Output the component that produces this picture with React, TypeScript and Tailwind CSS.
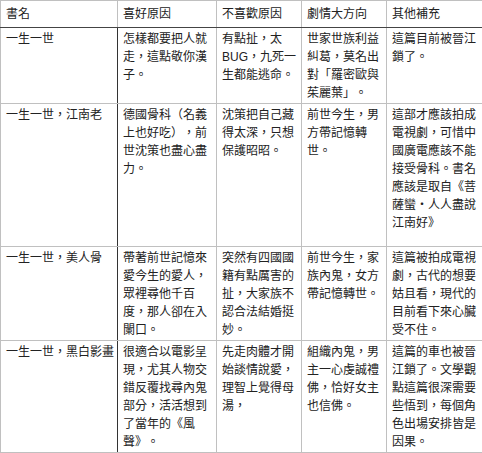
const headers = ["書名", "喜好原因", "不喜歡原因", "劇情大方向", "其他補充"];

const rows: { name: string; like: string; dislike: string; plot: string; note: string; tall?: boolean }[] = [
  {
    name: "一生一世",
    like: "怎樣都要把人就走，這點敬你漢子。",
    dislike: "有點扯，太BUG，九死一生都能逃命。",
    plot: "世家世族利益糾葛，莫名出對「羅密歐與茱麗葉」。",
    note: "這篇目前被晉江鎖了。",
  },
  {
    name: "一生一世，江南老",
    like: "德國骨科（名義上也好吃），前世沈策也盡心盡力。",
    dislike: "沈策把自己藏得太深，只想保護昭昭。",
    plot: "前世今生，男方帶記憶轉世。",
    note: "這部才應該拍成電視劇，可惜中國廣電應該不能接受骨科。書名應該是取自《菩薩蠻‧人人盡說江南好》",
    tall: true,
  },
  {
    name: "一生一世，美人骨",
    like: "帶著前世記憶來愛今生的愛人，眾裡尋他千百\u200b度，那人卻在入闌口。",
    dislike: "突然有四國國籍有點厲害的扯，大家族不認合法結婚挺妙。",
    plot: "前世今生，家族內鬼，女方帶記憶轉世。",
    note: "這篇被拍成電視劇，古代的想要姑且看，現代的目前看下來心臟受不住。",
  },
  {
    name: "一生一世，黑白影畫",
    like: "很適合以電影呈現，尤其人物交錯反覆找尋內鬼部分，活活想到了當年的《風聲》。",
    dislike: "先走肉體才開始談情說愛，理智上覺得母湯，",
    plot: "組織內鬼，男主一心虔誠禮佛，恰好女主也信佛。",
    note: "這篇的車也被晉江鎖了。文學觀點這篇很深需要些悟到，每個角色出場安排皆是因果。",
  },
];

const cell = "border border-[#c0c0c0] align-top pl-[5px] pr-[3px]";

export default function App() {
  return (
    <div
      className="bg-white w-[482px] h-[453px] text-[12px] leading-[18px] text-[#222] [text-spacing-trim:space-all]"
      style={{ fontFamily: '"Liberation Sans", "Noto Sans CJK TC", sans-serif' }}
    >
      <table className="border-collapse table-fixed w-[482px]">
        <colgroup>
          <col className="w-[117px]" />
          <col className="w-[99px]" />
          <col className="w-[85px]" />
          <col className="w-[85px]" />
          <col className="w-[96px]" />
        </colgroup>
        <thead>
          <tr>
            {headers.map((h) => (
              <th key={h} className={`${cell} pt-[4px] pb-[4px] border-b-[#444] text-left font-normal`}>
                {h}
              </th>
            ))}
          </tr>
        </thead>
        <tbody>
          {rows.map((r) => (
            <tr key={r.name} className={r.tall ? "h-[143px]" : ""}>
              <td className={`${cell} pt-[2px] pb-[1px] border-r-[#333]`}>{r.name}</td>
              <td className={`${cell} pt-[2px] pb-[1px]`}>{r.like}</td>
              <td className={`${cell} pt-[2px] pb-[1px]`}>{r.dislike}</td>
              <td className={`${cell} pt-[2px] pb-[1px]`}>{r.plot}</td>
              <td className={`${cell} pt-[2px] pb-[1px]`}>{r.note}</td>
            </tr>
          ))}
        </tbody>
      </table>
    </div>
  );
}
